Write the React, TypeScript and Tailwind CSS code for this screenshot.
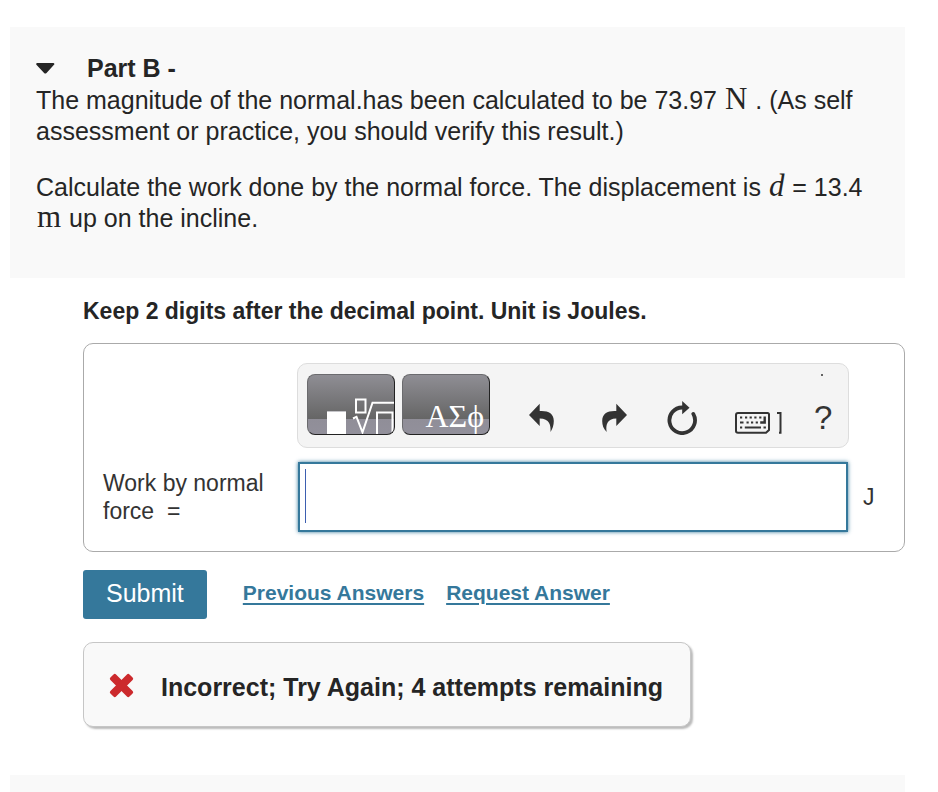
import React from "react";

function MathSymbol({ children, italic = false }: { children: React.ReactNode; italic?: boolean }) {
  return (
    <span className={`mx-px font-['Liberation_Serif',serif] text-[31px] leading-[28px] ${italic ? "italic" : ""}`}>
      {children}
    </span>
  );
}

function TemplateIcon() {
  return (
    <svg className="block h-full w-full" viewBox="0 0 86 59" fill="none" stroke="#fff" strokeWidth="2" aria-hidden="true">
      <rect x="19" y="36" width="19" height="24" fill="#fff" stroke="none" />
      <path d="M19 36.5h19" stroke="#c4c4c8" strokeWidth="1" />
      <rect x="48" y="24.500" width="9.500" height="13" />
      <path d="M45 43.500l3.500-1.700 6 15.500 10-29.600H87" />
      <path d="M69 60V37.500h15.500V60" />
    </svg>
  );
}

function UndoIcon() {
  return (
    <svg width="25" height="34" viewBox="0 0 25 34" fill="#333" aria-hidden="true">
      <path d="M0 14 10.700 2.700V10C19 9.500 24.800 12 24.800 20c0 4-1.300 8-3.300 11C22 24 20.500 17.500 10.700 17.500V25Z" />
    </svg>
  );
}

function RedoIcon() {
  return (
    <svg width="25" height="34" viewBox="0 0 25 34" fill="#333" aria-hidden="true">
      <path d="M25 14 14.300 2.700V10C6 9.500.2 12 .2 20c0 4 1.300 8 4.500 11C3.500 24 5 17.500 14.300 17.500V25Z" />
    </svg>
  );
}

function ResetIcon() {
  return (
    <svg width="30" height="34" viewBox="0 0 30 34" fill="none" aria-hidden="true">
      <path d="M15.200 6.500A12.800 12.800 0 1 0 26.300 12.900" stroke="#333" strokeWidth="3.800" strokeLinecap="round" />
      <path d="M15.200 0 22.500 6.700l-7.300 6.600Z" fill="#333" />
    </svg>
  );
}

function KeyboardIcon() {
  return (
    <svg width="47" height="34" viewBox="0 0 47 34" fill="none" stroke="#333" aria-hidden="true">
      <path d="M3 12H32.500Q34 12 34 13.500V29L31 31.800H3Q1 31.800 1 30V14Q1 12 3 12Z" strokeWidth="2" />
      <path
        d="M5 16.500h2.200M10 16.500h2.200M14.600 16.500h2.200M19.300 16.500h2.200M24.200 16.500h2.200M5 21.500h3.500M11.500 21.500h2.200M16 21.500h2.200M20.700 21.500h2.200M5 26.500h2.200M9.800 26.500H26M28.500 26.500h2.400"
        strokeWidth="2.200"
      />
      <path d="M29.700 15.500v6h-4.500" strokeWidth="2.400" />
      <path d="M42 12h3.500v19.800H44" strokeWidth="2" />
    </svg>
  );
}

const editorButton =
  "h-[61px] shrink-0 overflow-hidden rounded-[8px] border border-t-[#6b6b6e] border-l-[#6b6b6e] border-r-[#222] border-b-[#222] bg-[linear-gradient(to_bottom,#8f8e94_0%,#656565_75%,#908e98_75%,#92909b_100%)]";
const toolButton = "relative flex h-[61px] shrink-0 items-end";
const linkStyle = "text-[21px] leading-[28px] font-bold text-[#35789b] underline decoration-2 underline-offset-3";

export default function App() {
  return (
    <main className="overflow-hidden bg-white pt-[27px] pr-[33px] pl-[10px] font-['Liberation_Sans',Arial,sans-serif] text-[#252525]">
      <section className="bg-[#f9f9f9] px-[26px] pt-[26px] pb-[44px] text-[25px] leading-[31px]">
        <h2 className="mb-px font-bold">
          <button type="button" className="flex items-center gap-8" aria-expanded="true">
            <svg width="19" height="11" viewBox="0 0 19 11" fill="#252525" aria-hidden="true">
              <path d="M1 0h16.500q1.500.6.500 1.700L10.500 10q-1.200 1-2.400 0L.4 1.700Q-.3.600 1 0Z" />
            </svg>
            <span>Part B -</span>
          </button>
        </h2>
        <p>
          The magnitude of the normal.has been calculated to be 73.97 <MathSymbol>N</MathSymbol> . (As self assessment or
          practice, you should verify this result.)
        </p>
        <p className="mt-[25px]">
          Calculate the work done by the normal force. The displacement is <MathSymbol italic>d</MathSymbol> = 13.4{" "}
          <MathSymbol>m</MathSymbol> up on the incline.
        </p>
      </section>

      <form className="pl-[73px]" onSubmit={(e) => e.preventDefault()}>
        <p className="mt-[19px] text-[23px] leading-[28px] font-bold">
          Keep 2 digits after the decimal point. Unit is Joules.
        </p>

        <div className="mt-[18px] grid grid-cols-[194px_1fr_55px] items-center gap-y-[14px] rounded-[10px] border border-[#aaa] py-[19px] pl-[19px] text-[23px] leading-[28px] text-[#333]">
          <div
            role="toolbar"
            aria-label="Equation editor"
            className="col-start-2 flex items-center rounded-[10px] border border-[#ddd] bg-[#f4f4f4] pt-[10px] pb-[12px] pl-[9px]"
          >
            <div className="flex gap-[7px]">
              <button type="button" aria-label="Templates" className={`${editorButton} w-[88px]`}>
                <TemplateIcon />
              </button>
              <button
                type="button"
                aria-label="Symbols"
                className={`${editorButton} flex w-[88px] items-end justify-end pr-[5px] font-['Liberation_Serif',serif] text-[32px] leading-[36px] text-white`}
              >
                ΑΣϕ
              </button>
            </div>
            <button type="button" aria-label="Undo" className={`${toolButton} ml-[39px]`}>
              <UndoIcon />
            </button>
            <button type="button" aria-label="Redo" className={`${toolButton} ml-[48px]`}>
              <RedoIcon />
            </button>
            <button type="button" aria-label="Reset" className={`${toolButton} ml-[40px]`}>
              <ResetIcon />
            </button>
            <button type="button" aria-label="Keyboard shortcuts" className={`${toolButton} ml-[38px]`}>
              <KeyboardIcon />
            </button>
            <button type="button" aria-label="Help" className={`${toolButton} ml-[32px] text-[33px] leading-[34px]`}>
              <span className="absolute top-0 left-[7px] size-[2px] rounded-full bg-[#333]" />?
            </button>
          </div>

          <label htmlFor="answer" className="col-start-1 pr-4">
            Work by normal force &nbsp;=
          </label>
          <div className="relative px-px">
            <input
              id="answer"
              type="text"
              className="block h-[70px] w-full border-2 border-[#35789b] bg-white px-2 shadow-[0_0_4px_#35789b] outline-none"
            />
            <span className="absolute top-[7px] left-2 h-[54px] w-px bg-[#3d5fb0]" aria-hidden="true" />
          </div>
          <span className="pl-[14px]">J</span>
        </div>

        <div className="mt-[18px] flex items-center">
          <button
            type="submit"
            className="mr-[36px] h-[49px] rounded-[3px] bg-[#35789b] px-[23px] pb-[3px] text-[25px] leading-[28px] text-white"
          >
            Submit
          </button>
          <div className="flex gap-[22px] pb-[3px]">
            <a href="#previous" className={linkStyle}>
              Previous Answers
            </a>
            <a href="#request" className={linkStyle}>
              Request Answer
            </a>
          </div>
        </div>

        <div
          role="status"
          className="mt-[23px] flex h-[85px] w-fit items-center rounded-[10px] border border-[#c6c6c6] bg-[#f9f9f9] pr-[27px] pl-[25px] pt-[6px] text-[25px] leading-[31px] font-bold shadow-[2px_2px_2px_#bbb]"
        >
          <svg className="mr-[27px] mb-1" width="25" height="25" viewBox="0 0 25 25" fill="#cc2a2d" aria-hidden="true">
            <rect x="-1" y="8.500" width="27" height="8" rx="1.800" transform="rotate(45 12.500 12.500)" />
            <rect x="-1" y="8.500" width="27" height="8" rx="1.800" transform="rotate(-45 12.500 12.500)" />
          </svg>
          Incorrect; Try Again; 4 attempts remaining
        </div>
      </form>

      <section className="mt-[48px] h-[17px] bg-[#f9f9f9]" aria-label="Next part" />
    </main>
  );
}
